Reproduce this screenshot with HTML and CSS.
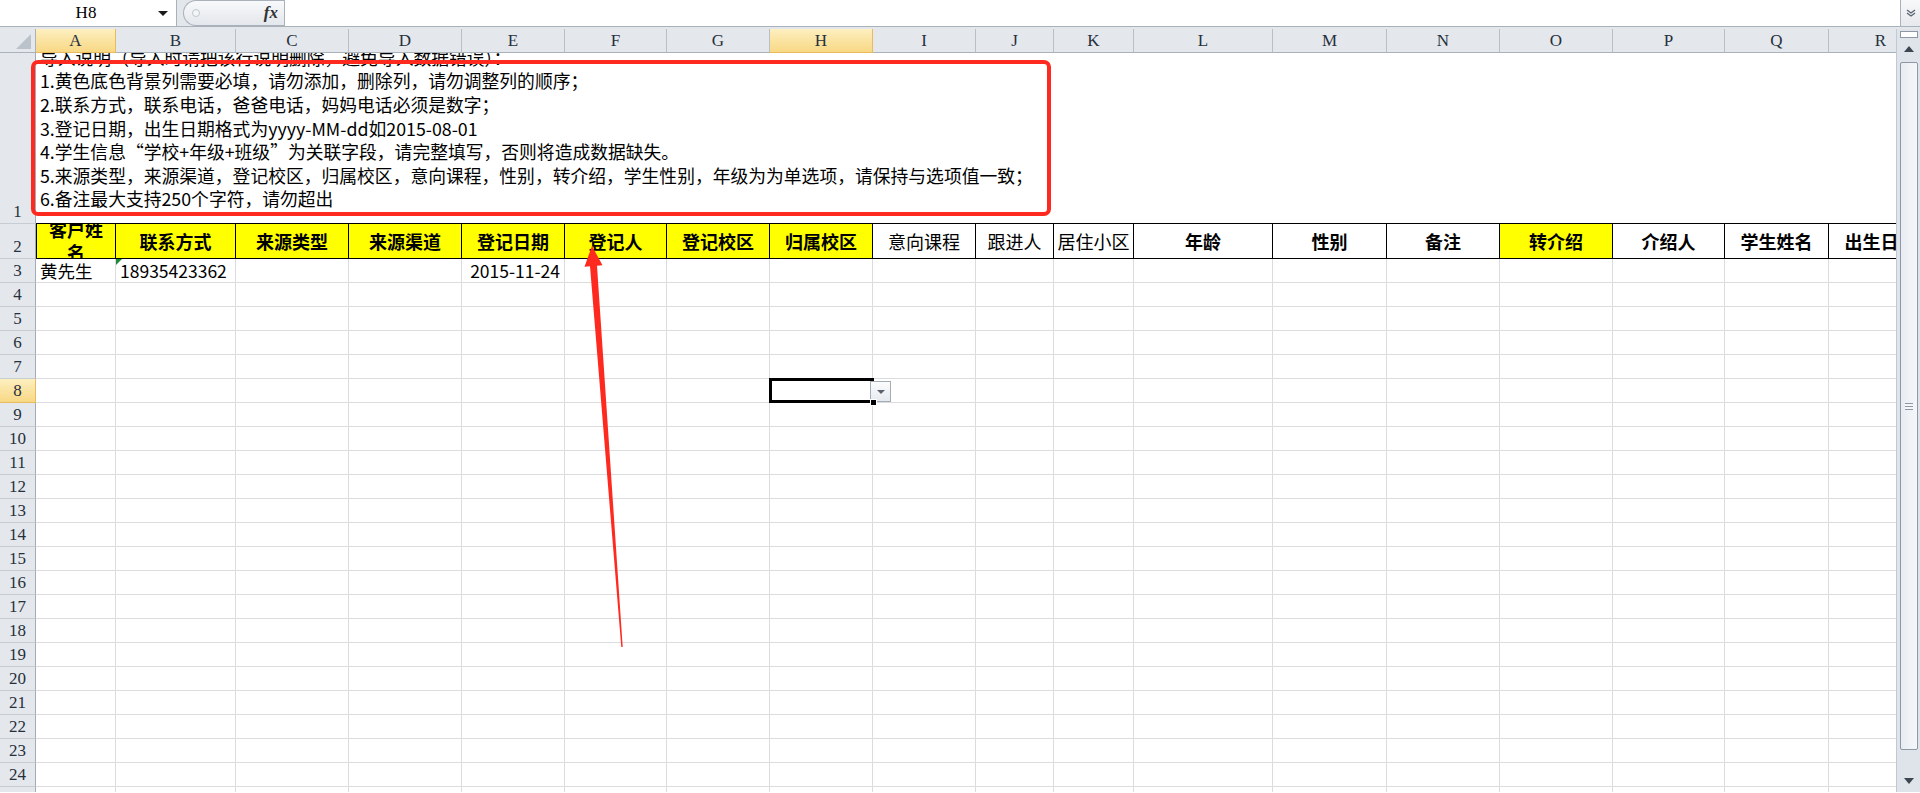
FILE: index.html
```html
<!DOCTYPE html>
<html lang="zh-CN">
<head>
    <meta charset="UTF-8">
    <title>学员导入模板</title>
    <link rel="stylesheet" href="styles.css">
</head>
<body>
    <div class="formula-bar">
        <div class="name-box">
            <span class="name-box-text">H8</span>
            <span class="name-box-arrow"></span>
        </div>
        <div class="fx-pill">
            <span class="fx-dot"></span>
            <span class="fx-label">fx</span>
        </div>
        <div class="formula-input"></div>
        <div class="formula-expand">
            <svg width="10" height="8" viewBox="0 0 10 8"><path d="M1 1 L5 4 L9 1 M1 4 L5 7 L9 4" fill="none" stroke="#5b6470" stroke-width="1.3"/></svg>
        </div>
    </div>
    <div class="bar-gap"></div>

    <div class="workspace">
        <div class="sheet">
            <div class="grid" id="grid">
                <div class="corner"><span class="corner-tri"></span></div>
                <div class="ch active">A</div>
                <div class="ch">B</div>
                <div class="ch">C</div>
                <div class="ch">D</div>
                <div class="ch">E</div>
                <div class="ch">F</div>
                <div class="ch">G</div>
                <div class="ch active">H</div>
                <div class="ch">I</div>
                <div class="ch">J</div>
                <div class="ch">K</div>
                <div class="ch">L</div>
                <div class="ch">M</div>
                <div class="ch">N</div>
                <div class="ch">O</div>
                <div class="ch">P</div>
                <div class="ch">Q</div>
                <div class="ch">R</div>

                <div class="rh rh-bottom">1</div>
                <div class="intro">
                    <p>导入说明（导入时请把该行说明删除，避免导入数据错误）：</p>
                    <p>1.黄色底色背景列需要必填，请勿添加，删除列，请勿调整列的顺序；</p>
                    <p>2.联系方式，联系电话，爸爸电话，妈妈电话必须是数字；</p>
                    <p>3.登记日期，出生日期格式为yyyy-MM-dd如2015-08-01</p>
                    <p>4.学生信息“学校+年级+班级”为关联字段，请完整填写，否则将造成数据缺失。</p>
                    <p>5.来源类型，来源渠道，登记校区，归属校区，意向课程，性别，转介绍，学生性别，年级为为单选项，请保持与选项值一致；</p>
                    <p>6.备注最大支持250个字符，请勿超出</p>
                </div>

                <div class="rh rh-bottom">2</div>
                <div class="hd required first"><span>客户姓名</span></div>
                <div class="hd required">联系方式</div>
                <div class="hd required">来源类型</div>
                <div class="hd required">来源渠道</div>
                <div class="hd required">登记日期</div>
                <div class="hd required">登记人</div>
                <div class="hd required">登记校区</div>
                <div class="hd required">归属校区</div>
                <div class="hd plain">意向课程</div>
                <div class="hd plain">跟进人</div>
                <div class="hd plain">居住小区</div>
                <div class="hd">年龄</div>
                <div class="hd">性别</div>
                <div class="hd">备注</div>
                <div class="hd required">转介绍</div>
                <div class="hd">介绍人</div>
                <div class="hd">学生姓名</div>
                <div class="hd">出生日期</div>

                <div class="rh">3</div>
                <div class="cell">黄先生</div>
                <div class="cell text-flag">18935423362</div>
                <div class="cell"></div>
                <div class="cell"></div>
                <div class="cell right">2015-11-24</div>
                <div class="cell"></div>
                <div class="cell"></div>
                <div class="cell"></div>
                <div class="cell"></div>
                <div class="cell"></div>
                <div class="cell"></div>
                <div class="cell"></div>
                <div class="cell"></div>
                <div class="cell"></div>
                <div class="cell"></div>
                <div class="cell"></div>
                <div class="cell"></div>
                <div class="cell"></div>
            </div>
        </div>

        <div class="vscroll">
            <div class="split-box"></div>
            <div class="scroll-btn">
                <svg width="10" height="6" viewBox="0 0 10 6"><path d="M0 6 L5 0 L10 6 Z" fill="#3d4550"/></svg>
            </div>
            <div class="scroll-thumb"><span class="grip"></span></div>
            <div class="scroll-track"></div>
            <div class="scroll-btn">
                <svg width="10" height="6" viewBox="0 0 10 6"><path d="M0 0 L5 6 L10 0 Z" fill="#3d4550"/></svg>
            </div>
        </div>
    </div>

    <svg class="annotation" width="1920" height="793" viewBox="0 0 1920 793">
        <rect x="33" y="62" width="1016" height="152" rx="5" fill="none" stroke="#ff2a1f" stroke-width="4"/>
        <polygon points="592,246 602.5,265.3 597,265.8 622.7,647 621.3,647.1 590,266.3 584.5,266.7" fill="#ff2a1f"/>
    </svg>

    <script>
        const grid = document.getElementById('grid');
        for (let r = 4; r <= 25; r++) {
            const head = document.createElement('div');
            head.className = r === 8 ? 'rh active' : 'rh';
            head.textContent = r;
            grid.appendChild(head);
            for (let c = 0; c < 18; c++) {
                const cell = document.createElement('div');
                cell.className = 'cell';
                if (r === 8 && c === 7) {
                    cell.classList.add('selected');
                    cell.innerHTML = '<span class="fill-handle"></span><span class="list-btn"></span>';
                }
                grid.appendChild(cell);
            }
        }
    </script>
</body>
</html>
```

FILE: styles.css
```css
* {
    box-sizing: border-box;
}
body {
    margin: 0;
    width: 1920px;
    height: 793px;
    overflow: hidden;
    position: relative;
    background-color: #fff;
    color: #000;
    font-family: "Noto Sans CJK SC", "Liberation Sans", sans-serif;
}

/* formula bar */
.formula-bar {
    display: flex;
    height: 27px;
    background-color: #e3e7ec;
    border-bottom: 1px solid #a9b1bb;
}
.name-box {
    width: 177px;
    display: flex;
    align-items: center;
    background-color: #fff;
    border-right: 1px solid #a9b1bb;
}
.name-box-text {
    flex: 1;
    text-align: center;
    padding-left: 14px;
    font-family: "Liberation Serif", serif;
    font-size: 17px;
}
.name-box-arrow {
    width: 0;
    height: 0;
    margin-right: 8px;
    border-left: 5px solid transparent;
    border-right: 5px solid transparent;
    border-top: 5px solid #1b1b1b;
}
.fx-pill {
    width: 101px;
    margin-left: 6px;
    display: flex;
    align-items: center;
    justify-content: space-between;
    padding: 0 6px 0 8px;
    border: 1px solid #a9b1bb;
    border-right: none;
    border-radius: 13px 0 0 13px;
    background: linear-gradient(#f8f9fb, #e4e7eb);
}
.fx-dot {
    width: 8px;
    height: 8px;
    border-radius: 50%;
    border: 1px solid #c0c6ce;
    background-color: #f4f5f7;
}
.fx-label {
    font-family: "Liberation Serif", serif;
    font-style: italic;
    font-weight: bold;
    font-size: 17px;
    color: #333;
}
.formula-input {
    flex: 1;
    background-color: #fff;
    border-left: 1px solid #a9b1bb;
}
.formula-expand {
    width: 20px;
    display: flex;
    align-items: center;
    justify-content: center;
    background: linear-gradient(#f7f8fa, #e6e9ed);
    border-left: 1px solid #a9b1bb;
}
.bar-gap {
    height: 2px;
    background-color: #e3e7ec;
}

/* sheet */
.workspace {
    display: flex;
    height: 763px;
}
.sheet {
    flex: 1;
    overflow: hidden;
}
.grid {
    display: grid;
    grid-template-columns: 36px 80px 120px 113px 113px 103px 102px 103px 103px 103px 78px 80px 139px 114px 113px 113px 112px 104px 104px;
    grid-template-rows: 24px 171px 35px;
    grid-auto-rows: 24px;
    width: 1933px;
}
.corner {
    position: relative;
    background-color: #e4e7ec;
    border-right: 1px solid #a9b1bb;
    border-bottom: 1px solid #a9b1bb;
}
.corner-tri {
    position: absolute;
    right: 4px;
    bottom: 3px;
    width: 0;
    height: 0;
    border-left: 15px solid transparent;
    border-bottom: 15px solid #bcc2ca;
}
.ch {
    display: flex;
    align-items: center;
    justify-content: center;
    background-color: #e4e7ec;
    border-right: 1px solid #b9bfc7;
    border-bottom: 1px solid #a9b1bb;
    font-family: "Liberation Serif", serif;
    font-size: 17px;
    color: #26303c;
}
.rh {
    display: flex;
    align-items: center;
    justify-content: center;
    background-color: #e4e7ec;
    border-right: 1px solid #a3abb6;
    border-bottom: 1px solid #c8cdd4;
    font-family: "Liberation Serif", serif;
    font-size: 17px;
    color: #26303c;
}
.rh-bottom {
    align-items: flex-end;
    padding-bottom: 1px;
}
.ch.active, .rh.active {
    background: linear-gradient(#fdefc0, #f8d884);
    border-color: #eabb5c;
}

.intro {
    grid-column: 2 / -1;
    display: flex;
    flex-direction: column;
    justify-content: flex-end;
    overflow: hidden;
    padding: 0 0 12px 4px;
    border-bottom: 1px solid #000;
    font-size: 17.8px;
    line-height: 23.6px;
    white-space: nowrap;
}
.intro p {
    margin: 0;
}

.hd {
    display: flex;
    align-items: center;
    justify-content: center;
    overflow: hidden;
    padding: 0 5px;
    text-align: center;
    border-right: 1px solid #000;
    border-bottom: 1px solid #000;
    font-size: 18px;
    font-weight: bold;
    line-height: 23px;
}
.hd.first {
    border-left: 1px solid #000;
}
.hd.required {
    background-color: #ffff00;
}
.hd.plain {
    font-weight: normal;
    white-space: nowrap;
    padding: 0;
}

.cell {
    display: flex;
    align-items: center;
    overflow: hidden;
    padding: 0 4px;
    white-space: nowrap;
    border-right: 1px solid #dadcdd;
    border-bottom: 1px solid #dadcdd;
    font-size: 17.5px;
}
.cell.right {
    justify-content: flex-end;
}
.text-flag {
    position: relative;
}
.text-flag::before {
    content: "";
    position: absolute;
    left: 0;
    top: 0;
    border-top: 6px solid #1f8a3b;
    border-right: 6px solid transparent;
}
.cell.selected {
    position: relative;
    overflow: visible;
}
.cell.selected::after {
    content: "";
    position: absolute;
    left: -1px;
    top: -1px;
    right: -2px;
    bottom: -1px;
    border: 3px solid #000;
}
.fill-handle {
    position: absolute;
    right: -5px;
    bottom: -4px;
    width: 7px;
    height: 7px;
    background-color: #000;
    border: 1px solid #fff;
    z-index: 2;
}
.list-btn {
    position: absolute;
    left: 100px;
    top: 2px;
    width: 21px;
    height: 21px;
    border: 1px solid #a4acb6;
    background: linear-gradient(#fbfcfd, #e6eaf0);
    z-index: 1;
}
.list-btn::after {
    content: "";
    position: absolute;
    left: 6px;
    top: 8px;
    border-left: 4px solid transparent;
    border-right: 4px solid transparent;
    border-top: 4px solid #5a6270;
}

/* vertical scrollbar */
.vscroll {
    width: 24px;
    display: flex;
    flex-direction: column;
    align-items: center;
    background-color: #dfe4eb;
    border-left: 1px solid #c2c9d2;
}
.split-box {
    width: 18px;
    height: 7px;
    margin-top: 2px;
    border: 1px solid #8e98a4;
    background-color: #fff;
}
.scroll-btn {
    height: 22px;
    display: flex;
    align-items: center;
    justify-content: center;
}
.scroll-thumb {
    width: 18px;
    height: 688px;
    margin-top: 2px;
    display: flex;
    align-items: center;
    justify-content: center;
    border: 1px solid #8e98a4;
    border-radius: 2px;
    background: linear-gradient(90deg, #e8ecf2, #f5f7fa);
}
.grip {
    width: 8px;
    height: 7px;
    border-top: 1px solid #8e98a4;
    border-bottom: 1px solid #8e98a4;
    background: linear-gradient(#f5f7fa 2px, #8e98a4 2px, #8e98a4 3px, #f5f7fa 3px);
}
.scroll-track {
    flex: 1;
}

.annotation {
    position: absolute;
    left: 0;
    top: 0;
    pointer-events: none;
}
```
